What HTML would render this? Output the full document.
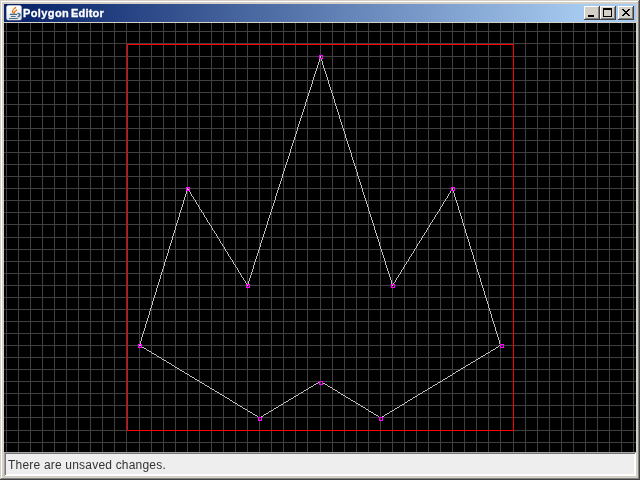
<!DOCTYPE html>
<html><head><meta charset="utf-8"><title>Polygon Editor</title>
<style>
html,body{margin:0;padding:0;}
body{width:640px;height:480px;overflow:hidden;background:#d4d0c8;position:relative;font-family:"Liberation Sans",sans-serif;}
.win{position:absolute;left:0;top:0;width:640px;height:480px;box-sizing:border-box;background:#d4d0c8;
 box-shadow:inset -1px -1px 0 #404040, inset 1px 1px 0 #d4d0c8, inset -2px -2px 0 #808080, inset 2px 2px 0 #ffffff;}
.title{position:absolute;left:4px;top:4px;width:632px;height:18px;background:linear-gradient(to right,#0a246a 18px,#a6caf0 580px);}
.title .txt{position:absolute;left:19px;top:2px;height:14px;line-height:14px;font-size:11px;font-weight:bold;color:#fff;-webkit-text-stroke:0.3px #fff;white-space:nowrap;will-change:transform;letter-spacing:0.4px;word-spacing:-1.7px;}
.icon{position:absolute;left:2px;top:1px;width:16px;height:16px;}
.btn{position:absolute;top:2px;width:16px;height:14px;box-sizing:border-box;background:#d4d0c8;
 box-shadow:inset -1px -1px 0 #404040, inset 1px 1px 0 #ffffff, inset -2px -2px 0 #808080;}
.btn svg{position:absolute;left:0;top:0;}
.cv{position:absolute;left:4px;top:23px;background:#000;display:block;}
.status{position:absolute;left:4px;top:452px;width:632px;height:24px;background:#eeeeee;overflow:hidden;}
.status i{position:absolute;display:block;}
.status .t{position:absolute;left:4px;top:6px;font-size:12px;line-height:14px;color:#333;white-space:nowrap;will-change:transform;letter-spacing:0.2px;}
</style></head><body>
<div class="win">
 <div class="title">
  <svg class="icon" viewBox="0 0 16 16" width="16" height="16">
   <defs><linearGradient id="ig" x1="0" y1="0" x2="0" y2="1"><stop offset="0" stop-color="#ffffff"/><stop offset="0.5" stop-color="#f6f6f6"/><stop offset="1" stop-color="#dedede"/></linearGradient></defs>
   <rect x="0.6" y="0.6" width="14.8" height="14.5" rx="1.6" fill="url(#ig)" stroke="#ffffff" stroke-opacity="0.4" stroke-width="1"/>
   <path d="M9.9 2.2C8.7 3.8 6.2 5 6.5 6.6C6.7 7.4 7.3 7.9 7.5 8.7" stroke="#e8720c" stroke-width="1.4" fill="none"/>
   <path d="M11.1 4.7C9.7 5.6 8.3 6.4 8.3 7.4C8.3 7.9 8.4 8.2 8.3 8.7" stroke="#e8720c" stroke-width="1.3" fill="none"/>
   <path d="M8.7 3.9L7.7 5.5" stroke="#f8f8f8" stroke-width="0.6" fill="none"/>
   <path d="M3.8 9.4h7.2" stroke="#3f6a8e" stroke-width="1.3" fill="none"/>
   <path d="M4.9 11.5h4.8M3 13.5h8.7" stroke="#47708f" stroke-width="1.1" fill="none"/>
   <path d="M11.3 8.5C14.6 8 14.7 11.3 11.6 11.7" stroke="#47708f" stroke-width="1.5" fill="none"/>
  </svg>
  <div class="txt">Polygon <span style="letter-spacing:0.2px">Editor</span></div>
  <div class="btn" style="left:580px"><svg width="16" height="14" shape-rendering="crispEdges"><rect x="4" y="9" width="6" height="2" fill="#000"/></svg></div>
  <div class="btn" style="left:596px"><svg width="16" height="14" shape-rendering="crispEdges"><rect x="3.5" y="2.5" width="8" height="8" fill="none" stroke="#000"/><rect x="3" y="2" width="9" height="2" fill="#000"/></svg></div>
  <div class="btn" style="left:614px"><svg width="16" height="14" shape-rendering="crispEdges"><path d="M4 3h2v1h1v1h2v-1h1v-1h2v1h-1v1h-1v1h-1v1h1v1h1v1h1v1h-2v-1h-1v-1h-2v1h-1v1h-2v-1h1v-1h1v-1h1v-1h-1v-1h-1v-1h-1z" fill="#000"/></svg></div>
 </div>
 <svg class="cv" width="632" height="429" viewBox="0 0 632 429" shape-rendering="crispEdges"><path d="M2.5 0V429M14.5 0V429M26.5 0V429M38.5 0V429M50.5 0V429M62.5 0V429M74.5 0V429M86.5 0V429M98.5 0V429M110.5 0V429M122.5 0V429M135.5 0V429M147.5 0V429M159.5 0V429M171.5 0V429M183.5 0V429M195.5 0V429M207.5 0V429M219.5 0V429M231.5 0V429M243.5 0V429M255.5 0V429M267.5 0V429M279.5 0V429M291.5 0V429M303.5 0V429M316.5 0V429M328.5 0V429M340.5 0V429M352.5 0V429M364.5 0V429M376.5 0V429M388.5 0V429M400.5 0V429M412.5 0V429M424.5 0V429M436.5 0V429M448.5 0V429M460.5 0V429M472.5 0V429M484.5 0V429M496.5 0V429M509.5 0V429M521.5 0V429M533.5 0V429M545.5 0V429M557.5 0V429M569.5 0V429M581.5 0V429M593.5 0V429M605.5 0V429M617.5 0V429M629.5 0V429M0 8.5H632M0 20.5H632M0 33.5H632M0 45.5H632M0 57.5H632M0 69.5H632M0 81.5H632M0 93.5H632M0 105.5H632M0 117.5H632M0 129.5H632M0 141.5H632M0 153.5H632M0 165.5H632M0 177.5H632M0 189.5H632M0 201.5H632M0 214.5H632M0 226.5H632M0 238.5H632M0 250.5H632M0 262.5H632M0 274.5H632M0 286.5H632M0 298.5H632M0 310.5H632M0 322.5H632M0 334.5H632M0 346.5H632M0 358.5H632M0 370.5H632M0 382.5H632M0 394.5H632M0 407.5H632M0 419.5H632" stroke="#404040" stroke-width="1" fill="none"/><rect x="123.5" y="21.5" width="386" height="386" stroke="#ff0000" stroke-width="1" fill="none"/><path d="M316 35h2v1h-2zM183 166h2v1h-2zM183 167h2v1h-2zM242 261h2v1h-2zM388 261h2v1h-2zM135 322h2v1h-2zM495 322h2v1h-2zM138 324h2v1h-2zM492 324h2v1h-2zM140 325h2v1h-2zM489 326h2v1h-2zM143 327h2v1h-2zM487 327h2v1h-2zM145 328h2v1h-2zM484 329h2v1h-2zM148 330h2v1h-2zM482 330h2v1h-2zM150 331h2v1h-2zM479 332h2v1h-2zM153 333h2v1h-2zM477 333h2v1h-2zM155 334h2v1h-2zM474 335h2v1h-2zM158 336h2v1h-2zM472 336h2v1h-2zM160 337h2v1h-2zM469 338h2v1h-2zM163 339h2v1h-2zM467 339h2v1h-2zM165 340h2v1h-2zM464 341h2v1h-2zM168 342h2v1h-2zM462 342h2v1h-2zM171 344h2v1h-2zM459 344h2v1h-2zM173 345h2v1h-2zM457 345h2v1h-2zM176 347h2v1h-2zM454 347h2v1h-2zM178 348h2v1h-2zM452 348h2v1h-2zM181 350h2v1h-2zM449 350h2v1h-2zM183 351h2v1h-2zM446 352h2v1h-2zM186 353h2v1h-2zM444 353h2v1h-2zM188 354h2v1h-2zM441 355h2v1h-2zM191 356h2v1h-2zM439 356h2v1h-2zM193 357h2v1h-2zM315 358h3v1h-3zM436 358h2v1h-2zM196 359h2v1h-2zM434 359h2v1h-2zM198 360h2v1h-2zM312 360h2v1h-2zM319 360h2v1h-2zM310 361h2v1h-2zM321 361h2v1h-2zM431 361h2v1h-2zM201 362h2v1h-2zM429 362h2v1h-2zM203 363h2v1h-2zM307 363h2v1h-2zM324 363h2v1h-2zM305 364h2v1h-2zM326 364h2v1h-2zM426 364h2v1h-2zM206 365h2v1h-2zM424 365h2v1h-2zM208 366h2v1h-2zM302 366h2v1h-2zM329 366h2v1h-2zM300 367h2v1h-2zM331 367h2v1h-2zM421 367h2v1h-2zM211 368h2v1h-2zM419 368h2v1h-2zM213 369h2v1h-2zM297 369h2v1h-2zM334 369h2v1h-2zM295 370h2v1h-2zM416 370h2v1h-2zM216 371h2v1h-2zM337 371h2v1h-2zM414 371h2v1h-2zM218 372h2v1h-2zM292 372h2v1h-2zM339 372h2v1h-2zM290 373h2v1h-2zM411 373h2v1h-2zM221 374h2v1h-2zM342 374h2v1h-2zM409 374h2v1h-2zM223 375h2v1h-2zM287 375h2v1h-2zM344 375h2v1h-2zM285 376h2v1h-2zM406 376h2v1h-2zM226 377h2v1h-2zM347 377h2v1h-2zM404 377h2v1h-2zM282 378h2v1h-2zM349 378h2v1h-2zM229 379h2v1h-2zM280 379h2v1h-2zM401 379h2v1h-2zM231 380h2v1h-2zM352 380h2v1h-2zM277 381h2v1h-2zM354 381h2v1h-2zM398 381h2v1h-2zM234 382h2v1h-2zM275 382h2v1h-2zM396 382h2v1h-2zM236 383h2v1h-2zM357 383h2v1h-2zM272 384h2v1h-2zM359 384h2v1h-2zM393 384h2v1h-2zM239 385h2v1h-2zM270 385h2v1h-2zM391 385h2v1h-2zM241 386h2v1h-2zM362 386h2v1h-2zM267 387h2v1h-2zM388 387h2v1h-2zM244 388h2v1h-2zM265 388h2v1h-2zM365 388h2v1h-2zM386 388h2v1h-2zM246 389h2v1h-2zM367 389h2v1h-2zM262 390h2v1h-2zM383 390h2v1h-2zM249 391h2v1h-2zM260 391h2v1h-2zM370 391h2v1h-2zM381 391h2v1h-2zM251 392h2v1h-2zM372 392h2v1h-2zM257 393h2v1h-2zM378 393h2v1h-2zM254 394h3v1h-3zM375 394h3v1h-3zM135 321h1v1h-1zM136 318h1v3h-1zM137 314h1v4h-1zM137 323h1v1h-1zM138 311h1v3h-1zM139 308h1v3h-1zM140 305h1v3h-1zM141 301h1v4h-1zM142 298h1v3h-1zM142 326h1v1h-1zM143 295h1v3h-1zM144 292h1v3h-1zM145 288h1v4h-1zM146 285h1v3h-1zM147 282h1v3h-1zM147 329h1v1h-1zM148 278h1v4h-1zM149 275h1v3h-1zM150 272h1v3h-1zM151 269h1v3h-1zM152 265h1v4h-1zM152 332h1v1h-1zM153 262h1v3h-1zM154 259h1v3h-1zM155 256h1v3h-1zM156 252h1v4h-1zM157 249h1v3h-1zM157 335h1v1h-1zM158 246h1v3h-1zM159 243h1v3h-1zM160 239h1v4h-1zM161 236h1v3h-1zM162 233h1v3h-1zM162 338h1v1h-1zM163 230h1v3h-1zM164 226h1v4h-1zM165 223h1v3h-1zM166 220h1v3h-1zM167 217h1v3h-1zM167 341h1v1h-1zM168 213h1v4h-1zM169 210h1v3h-1zM170 207h1v3h-1zM170 343h1v1h-1zM171 203h1v4h-1zM172 200h1v3h-1zM173 197h1v3h-1zM174 194h1v3h-1zM175 190h1v4h-1zM175 346h1v1h-1zM176 187h1v3h-1zM177 184h1v3h-1zM178 181h1v3h-1zM179 177h1v4h-1zM180 174h1v3h-1zM180 349h1v1h-1zM181 171h1v3h-1zM182 168h1v3h-1zM183 165h1v1h-1zM185 168h1v1h-1zM185 352h1v1h-1zM186 169h1v2h-1zM187 171h1v2h-1zM188 173h1v1h-1zM189 174h1v2h-1zM190 176h1v1h-1zM190 355h1v1h-1zM191 177h1v2h-1zM192 179h1v2h-1zM193 181h1v1h-1zM194 182h1v2h-1zM195 184h1v2h-1zM195 358h1v1h-1zM196 186h1v1h-1zM197 187h1v2h-1zM198 189h1v1h-1zM199 190h1v2h-1zM200 192h1v2h-1zM200 361h1v1h-1zM201 194h1v1h-1zM202 195h1v2h-1zM203 197h1v2h-1zM204 199h1v1h-1zM205 200h1v2h-1zM205 364h1v1h-1zM206 202h1v1h-1zM207 203h1v2h-1zM208 205h1v2h-1zM209 207h1v1h-1zM210 208h1v2h-1zM210 367h1v1h-1zM211 210h1v1h-1zM212 211h1v2h-1zM213 213h1v2h-1zM214 215h1v1h-1zM215 216h1v2h-1zM215 370h1v1h-1zM216 218h1v2h-1zM217 220h1v1h-1zM218 221h1v2h-1zM219 223h1v1h-1zM220 224h1v2h-1zM220 373h1v1h-1zM221 226h1v2h-1zM222 228h1v1h-1zM223 229h1v2h-1zM224 231h1v2h-1zM225 233h1v1h-1zM225 376h1v1h-1zM226 234h1v2h-1zM227 236h1v1h-1zM228 237h1v2h-1zM228 378h1v1h-1zM229 239h1v2h-1zM230 241h1v1h-1zM231 242h1v2h-1zM232 244h1v1h-1zM233 245h1v2h-1zM233 381h1v1h-1zM234 247h1v2h-1zM235 249h1v1h-1zM236 250h1v2h-1zM237 252h1v2h-1zM238 254h1v1h-1zM238 384h1v1h-1zM239 255h1v2h-1zM240 257h1v1h-1zM241 258h1v2h-1zM242 260h1v1h-1zM243 262h1v1h-1zM243 387h1v1h-1zM244 258h1v3h-1zM245 255h1v3h-1zM246 252h1v3h-1zM247 249h1v3h-1zM248 246h1v3h-1zM248 390h1v1h-1zM249 242h1v4h-1zM250 239h1v3h-1zM251 236h1v3h-1zM252 233h1v3h-1zM253 230h1v3h-1zM253 393h1v1h-1zM254 227h1v3h-1zM255 224h1v3h-1zM256 220h1v4h-1zM257 217h1v3h-1zM258 214h1v3h-1zM259 211h1v3h-1zM259 392h1v1h-1zM260 208h1v3h-1zM261 205h1v3h-1zM262 202h1v3h-1zM263 198h1v4h-1zM264 195h1v3h-1zM264 389h1v1h-1zM265 192h1v3h-1zM266 189h1v3h-1zM267 186h1v3h-1zM268 183h1v3h-1zM269 180h1v3h-1zM269 386h1v1h-1zM270 177h1v3h-1zM271 173h1v4h-1zM272 170h1v3h-1zM273 167h1v3h-1zM274 164h1v3h-1zM274 383h1v1h-1zM275 161h1v3h-1zM276 158h1v3h-1zM277 155h1v3h-1zM278 151h1v4h-1zM279 148h1v3h-1zM279 380h1v1h-1zM280 145h1v3h-1zM281 142h1v3h-1zM282 139h1v3h-1zM283 136h1v3h-1zM284 133h1v3h-1zM284 377h1v1h-1zM285 130h1v3h-1zM286 126h1v4h-1zM287 123h1v3h-1zM288 120h1v3h-1zM289 117h1v3h-1zM289 374h1v1h-1zM290 114h1v3h-1zM291 111h1v3h-1zM292 108h1v3h-1zM293 104h1v4h-1zM294 101h1v3h-1zM294 371h1v1h-1zM295 98h1v3h-1zM296 95h1v3h-1zM297 92h1v3h-1zM298 89h1v3h-1zM299 86h1v3h-1zM299 368h1v1h-1zM300 83h1v3h-1zM301 79h1v4h-1zM302 76h1v3h-1zM303 73h1v3h-1zM304 70h1v3h-1zM304 365h1v1h-1zM305 67h1v3h-1zM306 64h1v3h-1zM307 61h1v3h-1zM308 57h1v4h-1zM309 54h1v3h-1zM309 362h1v1h-1zM310 51h1v3h-1zM311 48h1v3h-1zM312 45h1v3h-1zM313 42h1v3h-1zM314 39h1v3h-1zM314 359h1v1h-1zM315 36h1v3h-1zM316 33h1v2h-1zM317 36h1v2h-1zM318 38h1v4h-1zM318 359h1v1h-1zM319 42h1v3h-1zM320 45h1v3h-1zM321 48h1v3h-1zM322 51h1v3h-1zM323 54h1v3h-1zM323 362h1v1h-1zM324 57h1v4h-1zM325 61h1v3h-1zM326 64h1v3h-1zM327 67h1v3h-1zM328 70h1v3h-1zM328 365h1v1h-1zM329 73h1v3h-1zM330 76h1v4h-1zM331 80h1v3h-1zM332 83h1v3h-1zM333 86h1v3h-1zM333 368h1v1h-1zM334 89h1v3h-1zM335 92h1v4h-1zM336 96h1v3h-1zM336 370h1v1h-1zM337 99h1v3h-1zM338 102h1v3h-1zM339 105h1v3h-1zM340 108h1v3h-1zM341 111h1v4h-1zM341 373h1v1h-1zM342 115h1v3h-1zM343 118h1v3h-1zM344 121h1v3h-1zM345 124h1v3h-1zM346 127h1v3h-1zM346 376h1v1h-1zM347 130h1v4h-1zM348 134h1v3h-1zM349 137h1v3h-1zM350 140h1v3h-1zM351 143h1v3h-1zM351 379h1v1h-1zM352 146h1v3h-1zM353 149h1v4h-1zM354 153h1v3h-1zM355 156h1v3h-1zM356 159h1v3h-1zM356 382h1v1h-1zM357 162h1v3h-1zM358 165h1v4h-1zM359 169h1v3h-1zM360 172h1v3h-1zM361 175h1v3h-1zM361 385h1v1h-1zM362 178h1v3h-1zM363 181h1v3h-1zM364 184h1v4h-1zM364 387h1v1h-1zM365 188h1v3h-1zM366 191h1v3h-1zM367 194h1v3h-1zM368 197h1v3h-1zM369 200h1v3h-1zM369 390h1v1h-1zM370 203h1v4h-1zM371 207h1v3h-1zM372 210h1v3h-1zM373 213h1v3h-1zM374 216h1v3h-1zM374 393h1v1h-1zM375 219h1v4h-1zM376 223h1v3h-1zM377 226h1v3h-1zM378 229h1v3h-1zM379 232h1v3h-1zM380 235h1v3h-1zM380 392h1v1h-1zM381 238h1v4h-1zM382 242h1v3h-1zM383 245h1v3h-1zM384 248h1v3h-1zM385 251h1v3h-1zM385 389h1v1h-1zM386 254h1v3h-1zM387 257h1v4h-1zM388 262h1v1h-1zM389 260h1v1h-1zM390 259h1v1h-1zM390 386h1v1h-1zM391 257h1v2h-1zM392 255h1v2h-1zM393 254h1v1h-1zM394 252h1v2h-1zM395 251h1v1h-1zM395 383h1v1h-1zM396 249h1v2h-1zM397 247h1v2h-1zM398 246h1v1h-1zM399 244h1v2h-1zM400 242h1v2h-1zM400 380h1v1h-1zM401 241h1v1h-1zM402 239h1v2h-1zM403 238h1v1h-1zM403 378h1v1h-1zM404 236h1v2h-1zM405 234h1v2h-1zM406 233h1v1h-1zM407 231h1v2h-1zM408 230h1v1h-1zM408 375h1v1h-1zM409 228h1v2h-1zM410 226h1v2h-1zM411 225h1v1h-1zM412 223h1v2h-1zM413 221h1v2h-1zM413 372h1v1h-1zM414 220h1v1h-1zM415 218h1v2h-1zM416 217h1v1h-1zM417 215h1v2h-1zM418 213h1v2h-1zM418 369h1v1h-1zM419 212h1v1h-1zM420 210h1v2h-1zM421 209h1v1h-1zM422 207h1v2h-1zM423 205h1v2h-1zM423 366h1v1h-1zM424 204h1v1h-1zM425 202h1v2h-1zM426 200h1v2h-1zM427 199h1v1h-1zM428 197h1v2h-1zM428 363h1v1h-1zM429 196h1v1h-1zM430 194h1v2h-1zM431 192h1v2h-1zM432 191h1v1h-1zM433 189h1v2h-1zM433 360h1v1h-1zM434 188h1v1h-1zM435 186h1v2h-1zM436 184h1v2h-1zM437 183h1v1h-1zM438 181h1v2h-1zM438 357h1v1h-1zM439 179h1v2h-1zM440 178h1v1h-1zM441 176h1v2h-1zM442 175h1v1h-1zM443 173h1v2h-1zM443 354h1v1h-1zM444 171h1v2h-1zM445 170h1v1h-1zM446 168h1v2h-1zM447 167h1v1h-1zM448 165h1v2h-1zM448 351h1v1h-1zM449 167h1v3h-1zM450 170h1v4h-1zM451 174h1v3h-1zM451 349h1v1h-1zM452 177h1v3h-1zM453 180h1v3h-1zM454 183h1v4h-1zM455 187h1v3h-1zM456 190h1v3h-1zM456 346h1v1h-1zM457 193h1v3h-1zM458 196h1v4h-1zM459 200h1v3h-1zM460 203h1v3h-1zM461 206h1v4h-1zM461 343h1v1h-1zM462 210h1v3h-1zM463 213h1v3h-1zM464 216h1v3h-1zM465 219h1v4h-1zM466 223h1v3h-1zM466 340h1v1h-1zM467 226h1v3h-1zM468 229h1v3h-1zM469 232h1v4h-1zM470 236h1v3h-1zM471 239h1v3h-1zM471 337h1v1h-1zM472 242h1v4h-1zM473 246h1v3h-1zM474 249h1v3h-1zM475 252h1v3h-1zM476 255h1v4h-1zM476 334h1v1h-1zM477 259h1v3h-1zM478 262h1v3h-1zM479 265h1v3h-1zM480 268h1v4h-1zM481 272h1v3h-1zM481 331h1v1h-1zM482 275h1v3h-1zM483 278h1v3h-1zM484 281h1v4h-1zM485 285h1v3h-1zM486 288h1v3h-1zM486 328h1v1h-1zM487 291h1v4h-1zM488 295h1v3h-1zM489 298h1v3h-1zM490 301h1v3h-1zM491 304h1v4h-1zM491 325h1v1h-1zM492 308h1v3h-1zM493 311h1v3h-1zM494 314h1v3h-1zM494 323h1v1h-1zM495 317h1v4h-1zM496 321h1v1h-1z" fill="#c0c0c0"/><rect x="315.5" y="32.5" width="3" height="3" stroke="#ff00ff" stroke-width="1" fill="none"/><rect x="387.5" y="261.5" width="3" height="3" stroke="#ff00ff" stroke-width="1" fill="none"/><rect x="447.5" y="164.5" width="3" height="3" stroke="#ff00ff" stroke-width="1" fill="none"/><rect x="496.5" y="321.5" width="3" height="3" stroke="#ff00ff" stroke-width="1" fill="none"/><rect x="375.5" y="394.5" width="3" height="3" stroke="#ff00ff" stroke-width="1" fill="none"/><rect x="315.5" y="358.5" width="3" height="3" stroke="#ff00ff" stroke-width="1" fill="none"/><rect x="254.5" y="394.5" width="3" height="3" stroke="#ff00ff" stroke-width="1" fill="none"/><rect x="134.5" y="321.5" width="3" height="3" stroke="#ff00ff" stroke-width="1" fill="none"/><rect x="182.5" y="164.5" width="3" height="3" stroke="#ff00ff" stroke-width="1" fill="none"/><rect x="242.5" y="261.5" width="3" height="3" stroke="#ff00ff" stroke-width="1" fill="none"/></svg>
 <div class="status"><i style="left:0;top:0;width:632px;height:1px;background:#a6a6a6"></i><i style="left:0;top:0;width:1px;height:24px;background:#a6a6a6"></i><i style="left:1px;top:1px;width:630px;height:1px;background:#747474"></i><i style="left:1px;top:1px;width:1px;height:22px;background:#747474"></i><i style="left:1px;top:23px;width:631px;height:1px;background:#fff"></i><i style="left:631px;top:1px;width:1px;height:23px;background:#fff"></i><i style="left:2px;top:22px;width:629px;height:1px;background:#fff"></i><i style="left:630px;top:2px;width:1px;height:21px;background:#fff"></i><div class="t">There are unsaved changes.</div></div>
</div>
</body></html>
